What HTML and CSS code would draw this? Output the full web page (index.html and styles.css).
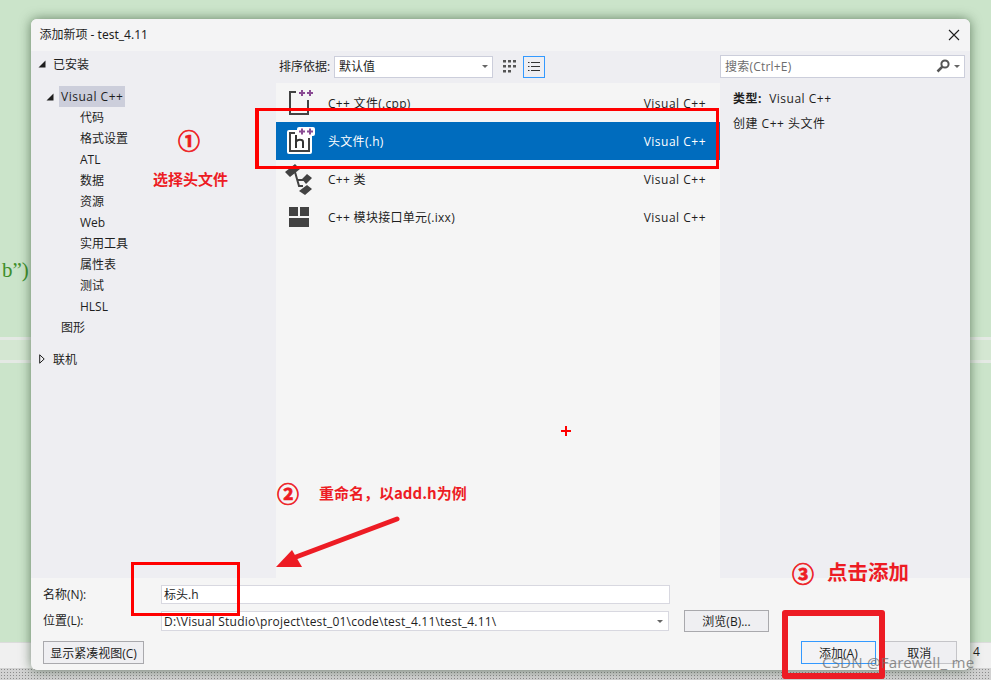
FILE: index.html
```html
<!DOCTYPE html>
<html lang="zh-CN">
<head>
<meta charset="utf-8">
<title>添加新项 - test_4.11</title>
<link rel="stylesheet" href="styles.css">
</head>
<body>
<div class="desktop">
  <div class="band"></div>
  <div class="code-frag">b”)</div>
  <div class="status-strip"><span class="status-num">4</span></div>
  <div class="dotted"></div>

  <div class="dialog">
    <header class="titlebar">
      <span>添加新项 - test_4.11</span>
      <svg class="close" viewBox="0 0 12 12" width="12" height="12"><path d="M1 1 11 11M11 1 1 11" stroke="#1e1e1e" stroke-width="1.1" fill="none"/></svg>
    </header>
    <div class="main">
      <nav class="tree">
        <div class="tree-head"><svg class="tri" viewBox="0 0 8 8" width="8" height="8"><path d="M7.5 0.5V7.5H0.5Z" fill="#1e1e1e"/></svg><span>已安装</span></div>
        <div class="tree-cat"><svg class="tri" viewBox="0 0 8 8" width="8" height="8"><path d="M7.5 0.5V7.5H0.5Z" fill="#1e1e1e"/></svg><span class="tree-sel">Visual C++</span></div>
        <div class="tree-item">代码</div>
        <div class="tree-item">格式设置</div>
        <div class="tree-item">ATL</div>
        <div class="tree-item">数据</div>
        <div class="tree-item">资源</div>
        <div class="tree-item">Web</div>
        <div class="tree-item">实用工具</div>
        <div class="tree-item">属性表</div>
        <div class="tree-item">测试</div>
        <div class="tree-item">HLSL</div>
        <div class="tree-sub">图形</div>
        <div class="tree-online"><svg class="tri-open" viewBox="0 0 6 10" width="6" height="10"><path d="M0.7 0.8 5.2 5 0.7 9.2Z" fill="none" stroke="#1e1e1e" stroke-width="1"/></svg><span>联机</span></div>
      </nav>
      <section class="center">
        <div class="toolbar">
          <span class="sort-label">排序依据:</span>
          <div class="select"><span>默认值</span><i class="caret"></i></div>
          <svg class="grid-icon" viewBox="0 0 14 14" width="14" height="14"><path d="M0 0h3v2.500H0zM5 0h3v2.500H5zM10 0h3v2.500h-3zM0 5h3v2.500H0zM5 5h3v2.500H5zM10 5h3v2.500h-3zM0 10h3v2.500H0zM5 10h3v2.500H5z" fill="#555"/></svg>
          <div class="list-btn"><svg viewBox="0 0 12 10" width="12" height="10"><path d="M0 .5h1.500M3 .5h9M0 4.500h1.500M3 4.500h9M0 8.500h1.500M3 8.500h9" stroke="#333" stroke-width="1" fill="none"/></svg></div>
        </div>
        <div class="list">
          <div class="row">
            <svg class="row-icon" viewBox="0 0 28 28" width="28" height="28"><path d="M10 3H4V25H22V11" fill="none" stroke="#424242" stroke-width="2"/><path d="M13 4h6M16 1v6M21 4h6M24 1v6" stroke="#8a4b94" stroke-width="2" fill="none"/></svg>
            <span class="row-name">C++ 文件(.cpp)</span><span class="row-type">Visual C++</span>
          </div>
          <div class="row row-active">
            <svg class="row-icon" viewBox="0 0 28 28" width="28" height="28"><rect x="1" y="3" width="25" height="24" rx="2" fill="#fff"/><path d="M9 6H4V24H23V11" fill="none" stroke="#424242" stroke-width="2"/><path d="M10 8V21M10 15C11 12 17 12 17 15V21" fill="none" stroke="#333" stroke-width="2"/><rect x="11" y="0" width="18" height="9" rx="2" fill="#fff"/><path d="M13 4.500h6M16 1.500v6M21 4.500h6M24 1.500v6" stroke="#8a4b94" stroke-width="2" fill="none"/></svg>
            <span class="row-name">头文件(.h)</span><span class="row-type">Visual C++</span>
          </div>
          <div class="row">
            <svg class="row-icon" viewBox="0 0 28 28" width="28" height="28"><path d="M-1 7 9-1 14 4 4 12Z M16 14 21 9 26 13 20 19Z M13 26 21 20 26 24 19 30Z" fill="#424242"/><path d="M9 7 13 21H17M12 15H18" fill="none" stroke="#424242" stroke-width="2"/></svg>
            <span class="row-name">C++ 类</span><span class="row-type">Visual C++</span>
          </div>
          <div class="row">
            <svg class="row-icon" viewBox="0 0 28 28" width="28" height="28"><path d="M3 4H12V13H3ZM14 4H23V13H14ZM3 15H23V24H3Z" fill="#424242"/></svg>
            <span class="row-name">C++ 模块接口单元(.ixx)</span><span class="row-type">Visual C++</span>
          </div>
        </div>
      </section>
      <aside class="detail">
        <div class="search"><span class="search-text">搜索(Ctrl+E)</span>
          <svg viewBox="0 0 14 14" width="14" height="14"><circle cx="9" cy="5" r="3.600" fill="none" stroke="#555" stroke-width="2"/><path d="M6.500 7.500 1.500 12.500" stroke="#555" stroke-width="2.500"/></svg><i class="caret search-caret"></i></div>
        <div class="detail-body">
          <p class="detail-type"><b>类型:</b>&nbsp; Visual C++</p>
          <p class="detail-desc">创建 C++ 头文件</p>
        </div>
      </aside>
    </div>
    <form class="form">
      <div class="form-row">
        <label class="form-label">名称(N):</label>
        <div class="input">标头.h</div>
      </div>
      <div class="form-row form-row-loc">
        <label class="form-label">位置(L):</label>
        <div class="input input-combo"><span class="path">D:\Visual Studio\project\test_01\code\test_4.11\test_4.11\</span><i class="caret"></i></div>
        <div class="btn btn-browse">浏览(B)...</div>
      </div>
      <div class="form-actions">
        <div class="btn btn-compact">显示紧凑视图(C)</div>
        <div class="btn btn-add">添加(A)</div>
        <div class="btn btn-cancel">取消</div>
      </div>
    </form>
  </div>

  <div class="mark mark-type"></div>
  <div class="mark mark-name"></div>
  <div class="mark-add"></div>
  <svg class="arrow" viewBox="0 0 130 56" width="130" height="56"><path d="M121 5 20 43" stroke="#ed1c24" stroke-width="5" stroke-linecap="round" fill="none"/><path d="M0 53 16 36 26 53Z" fill="#ed1c24"/></svg>
  <span class="note circled n1">①</span>
  <span class="note n1t">选择头文件</span>
  <span class="note circled n2">②</span>
  <span class="note n2t">重命名，以add.h为例</span>
  <span class="note circled n3">③</span>
  <span class="note n3t">点击添加</span>
  <span class="cursor-plus"></span>
  <span class="watermark">CSDN @Farewell_ me</span>
</div>
</body>
</html>
```

FILE: styles.css
```css
* { box-sizing: border-box; }
html, body { margin: 0; padding: 0; }
body { font-family: "Open Sans", "Noto Sans CJK SC", sans-serif; font-size: 12px; color: #1e1e1e; }
.desktop { position: relative; width: 991px; height: 680px; overflow: hidden; background: #cbe4ca; }

.band { position: absolute; left: 0; top: 337px; width: 100%; height: 26px; background: #d4e7d2; border-top: 3px solid #e4e9e4; border-bottom: 3px solid #e4e9e4; }
.code-frag { position: absolute; left: 2px; top: 258px; font: 21px "Liberation Serif", serif; color: #3f8f2c; }
.status-strip { position: absolute; left: 0; top: 642px; width: 100%; height: 26px; background: #f0f0f0; border-top: 1px solid #dcdcdc; }
.status-num { position: absolute; left: 973px; top: 0; font-size: 12px; }
.dotted { position: absolute; left: 0; top: 668px; width: 100%; height: 12px; background-color: #d2d2d2; background-image: radial-gradient(#8c8c8c 35%, transparent 40%); background-size: 3px 3px; }

.dialog { position: absolute; left: 31px; top: 19px; width: 939px; height: 651px; display: flex; flex-direction: column; background: #f5f5f5; border-radius: 6px; overflow: hidden; box-shadow: 0 0 12px rgba(30, 60, 30, .6); }
.titlebar { height: 32px; flex: none; display: flex; align-items: center; justify-content: space-between; padding: 0 10px 3px 8.500px; background: #f4f4f5; font-family: "Noto Sans", "Noto Sans CJK SC", sans-serif; }
.close { display: block; margin-top: 3px; }

.main { display: flex; height: 527px; flex: none; background: #eeeef2; }
.tree { width: 244px; flex: none; padding-top: 3px; }
.tree-head { display: flex; align-items: center; height: 20px; padding-left: 7px; gap: 7px; }
.tree-cat { display: flex; align-items: center; height: 21px; margin-top: 12px; padding-left: 15px; gap: 5px; }
.tree-sel { background: #cccedb; padding: 0 2px; height: 21px; line-height: 21px; letter-spacing: .5px; }
.tree-item { height: 21px; line-height: 21px; padding-left: 49px; }
.tree-sub { height: 21px; line-height: 21px; padding-left: 30px; }
.tree-online { display: flex; align-items: center; height: 21px; margin-top: 10px; padding-left: 8px; gap: 8px; }
.tri, .tri-open { display: block; flex: none; }

.center { width: 445px; flex: none; display: flex; flex-direction: column; }
.toolbar { height: 32px; flex: none; display: flex; align-items: center; padding-left: 4px; }
.sort-label { width: 55px; flex: none; margin-top: -2px; }
.select { width: 159px; height: 22px; background: #fff; border: 1px solid #cccedb; display: flex; align-items: center; justify-content: space-between; padding: 0 4px 2px; }
.caret { display: block; width: 0; height: 0; border: 3px solid transparent; border-top: 3px solid #666; border-bottom: 0; flex: none; }
.grid-icon { margin-left: 10px; flex: none; }
.list-btn { width: 22px; height: 22px; margin-left: 6px; border: 1px solid #3399ff; display: flex; align-items: center; justify-content: center; }
.list { flex: 1; background: #f5f5f5; margin-left: 1px; padding-top: 1px; }
.row { display: flex; align-items: center; height: 38px; padding: 0 14px 0 10px; }
.row-icon { flex: none; margin-right: 14px; display: block; overflow: visible; }
.row-name { flex: 1; letter-spacing: .3px; }
.row-type { letter-spacing: .5px; }
.row-active { background: #006cbe; color: #fff; }

.detail { flex: 1; min-width: 0; }
.search { display: flex; align-items: center; width: 245px; height: 23px; margin-top: 4px; background: #fff; border: 1px solid #cccedb; padding: 0 4px 1px; }
.search-text { flex: 1; color: #6d6d6d; letter-spacing: .2px; }
.search-caret { margin-left: 4px; }
.detail-body { padding: 12px 0 0 13px; letter-spacing: .5px; }
.detail-body p { margin: 0; height: 25px; line-height: 18px; }

.form { flex: 1; position: relative; padding: 7px 13px 0 12px; }
.form-row { display: flex; align-items: center; height: 19px; }
.form-row-loc { margin-top: 6px; height: 22px; }
.form-label { width: 118px; flex: none; margin-top: -2px; }
.input { width: 509px; height: 19px; background: #fff; border: 1px solid #d8d8e0; line-height: 17px; padding-left: 2px; }
.input-combo { width: 508px; height: 20px; display: flex; align-items: center; justify-content: space-between; padding-right: 5px; }
.path { letter-spacing: .2px; }
.btn { display: flex; align-items: center; justify-content: center; height: 23px; background: #efeff2; border: 1px solid #a9a9ad; }
.btn-browse { width: 85px; margin-left: 15px; height: 22px; }
.form-actions { display: flex; margin-top: 9px; }
.btn-compact { width: 102px; }
.btn-add { width: 75px; margin-left: 657px; background: #f3f3f5; border-color: #3399ff; }
.btn-cancel { width: 76px; margin-left: 6px; border-color: #c4c4c8; }

.mark { position: absolute; border: 3px solid #ff0000; }
.mark-type { left: 255px; top: 108px; width: 464px; height: 61px; border-width: 3px 3px 3px 4px; }
.mark-name { left: 131px; top: 562px; width: 109px; height: 54px; }
.mark-add { position: absolute; left: 782px; top: 610px; width: 103px; height: 69px; border: 6px solid #ed1c24; border-radius: 3px; }
.arrow { position: absolute; left: 276px; top: 514px; }
.note { position: absolute; color: #ed1c24; font-weight: 700; font-family: "Noto Sans CJK SC", sans-serif; white-space: nowrap; line-height: 1; }
.circled { -webkit-text-stroke: .7px #ed1c24; }
.n1 { left: 178px; top: 128px; font-size: 22px; }
.n1t { left: 153px; top: 171px; font-size: 15px; }
.n2 { left: 277px; top: 481px; font-size: 22px; }
.n2t { left: 319px; top: 485px; font-size: 15px; }
.n3 { left: 792px; top: 561px; font-size: 22px; }
.n3t { left: 827px; top: 561px; font-size: 20.500px; }
.cursor-plus { position: absolute; left: 561px; top: 430px; width: 10px; height: 2px; background: #f00; }
.cursor-plus::after { content: ""; position: absolute; left: 4px; top: -4px; width: 2px; height: 10px; background: #f00; }
.watermark { position: absolute; left: 822px; top: 652px; font-family: "Noto Sans", sans-serif; font-size: 15px; letter-spacing: .2px; color: rgba(110, 110, 110, .75); white-space: nowrap; }
```
